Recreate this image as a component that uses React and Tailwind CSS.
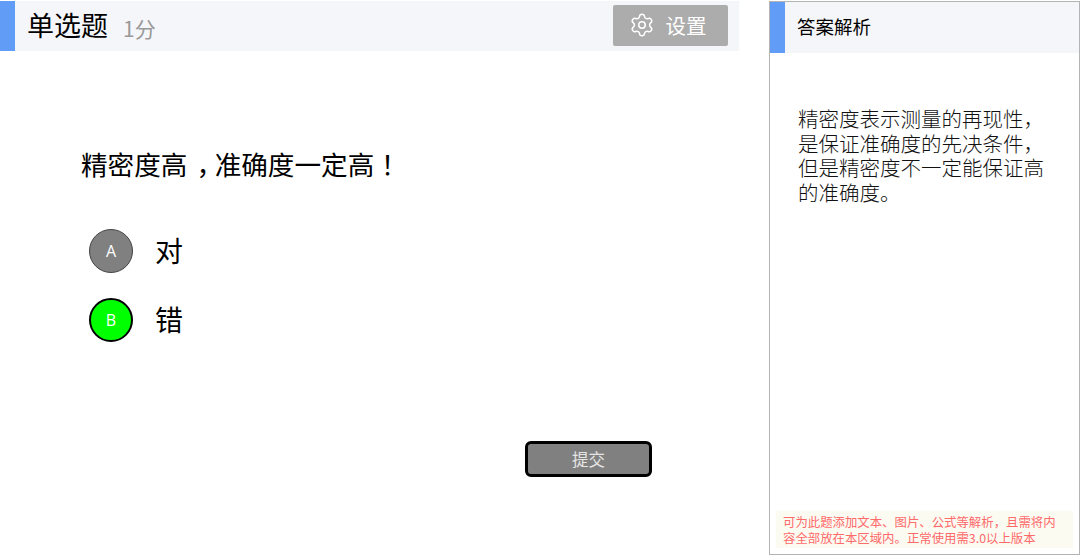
import { Settings } from 'lucide-react'

const font = { fontFamily: '"Noto Sans CJK SC", "Noto Sans", sans-serif' }

function Option({ letter, label, color, ring }) {
  return (
    <div className="flex items-center h-[44px]">
      <div className={`w-[44px] h-[44px] rounded-full flex items-center justify-center text-[16px] text-white font-['Open_Sans'] ${color} ${ring}`}>{letter}</div>
      <span className="ml-[22px] mb-[3px] text-[28px] leading-none text-black">{label}</span>
    </div>
  )
}

export default function App() {
  return (
    <div className="w-[1080px] h-[555px] bg-white flex overflow-hidden [text-spacing-trim:space-all]" style={font}>
      {/* Question */}
      <div className="w-[739px] pt-px flex flex-col">
        <div className="h-[50px] bg-[#f5f6f9] flex items-center">
          <div className="w-[15px] h-full bg-[#619cf6]" />
          <span className="ml-[12px] mb-[3px] text-[27px] leading-none text-black">单选题</span>
          <span className="ml-[15px] mt-[5px] text-[21px] leading-none text-[#999]">1分</span>
          <button className="ml-auto mr-[11px] mb-[2px] w-[115px] h-[41px] pr-[6px] rounded-[2px] bg-[#acacac] text-white flex items-center justify-center gap-[11px] text-[20.5px]">
            <Settings size={26} strokeWidth={1.4} />
            设置
          </button>
        </div>
        <div className="pl-[81px] pt-[96px] text-[26.6px] leading-[34px] text-black whitespace-nowrap">
          精密度高<span className="inline-block pl-[9px] pr-[5px] [font-feature-settings:'halt']">，</span>准确度一定高<span className="font-['Noto_Sans_CJK_TC']">！</span>
        </div>
        <div className="pl-[89px] pt-[48px] flex flex-col gap-[25px]">
          <Option letter="A" label="对" color="bg-[#808080]" ring="border-[1.5px] border-[#444]" />
          <Option letter="B" label="错" color="bg-[#00ff00]" ring="border-2 border-black" />
        </div>
        <div className="pl-[525px] pt-[99px]">
          <button className="w-[127px] h-[36px] rounded-[6px] border-[3px] border-black bg-[#808080] text-[#e5e5e5] text-[16.5px] flex items-center justify-center">提交</button>
        </div>
      </div>

      {/* Answer panel */}
      <div className="ml-[30px] mt-px w-[311px] h-[554px] border border-[#b4b4b4] flex flex-col">
        <div className="h-[51px] bg-[#f5f6f9] flex items-center shrink-0">
          <div className="w-[15px] h-full bg-[#619cf6]" />
          <span className="ml-[12px] mb-[3px] text-[18.5px] leading-none text-black">答案解析</span>
        </div>
        <div className="pl-[28px] pr-[10px] pt-[53px] text-[20.5px] leading-[24.7px] font-light text-[#111] whitespace-nowrap flex-1">
          精密度表示测量的再现性，<br />是保证准确度的先决条件，<br />但是精密度不一定能保证高<br />的准确度。
        </div>
        <div className="mx-[6px] mb-[6px] h-[37px] bg-[#fbfbf2] px-[7px] pt-[3px] text-[12.4px] leading-[16px] text-[#ff6a6a] whitespace-nowrap">
          可为此题添加文本、图片、公式等解析，且需将内<br />容全部放在本区域内。正常使用需3.0以上版本
        </div>
      </div>
    </div>
  )
}
